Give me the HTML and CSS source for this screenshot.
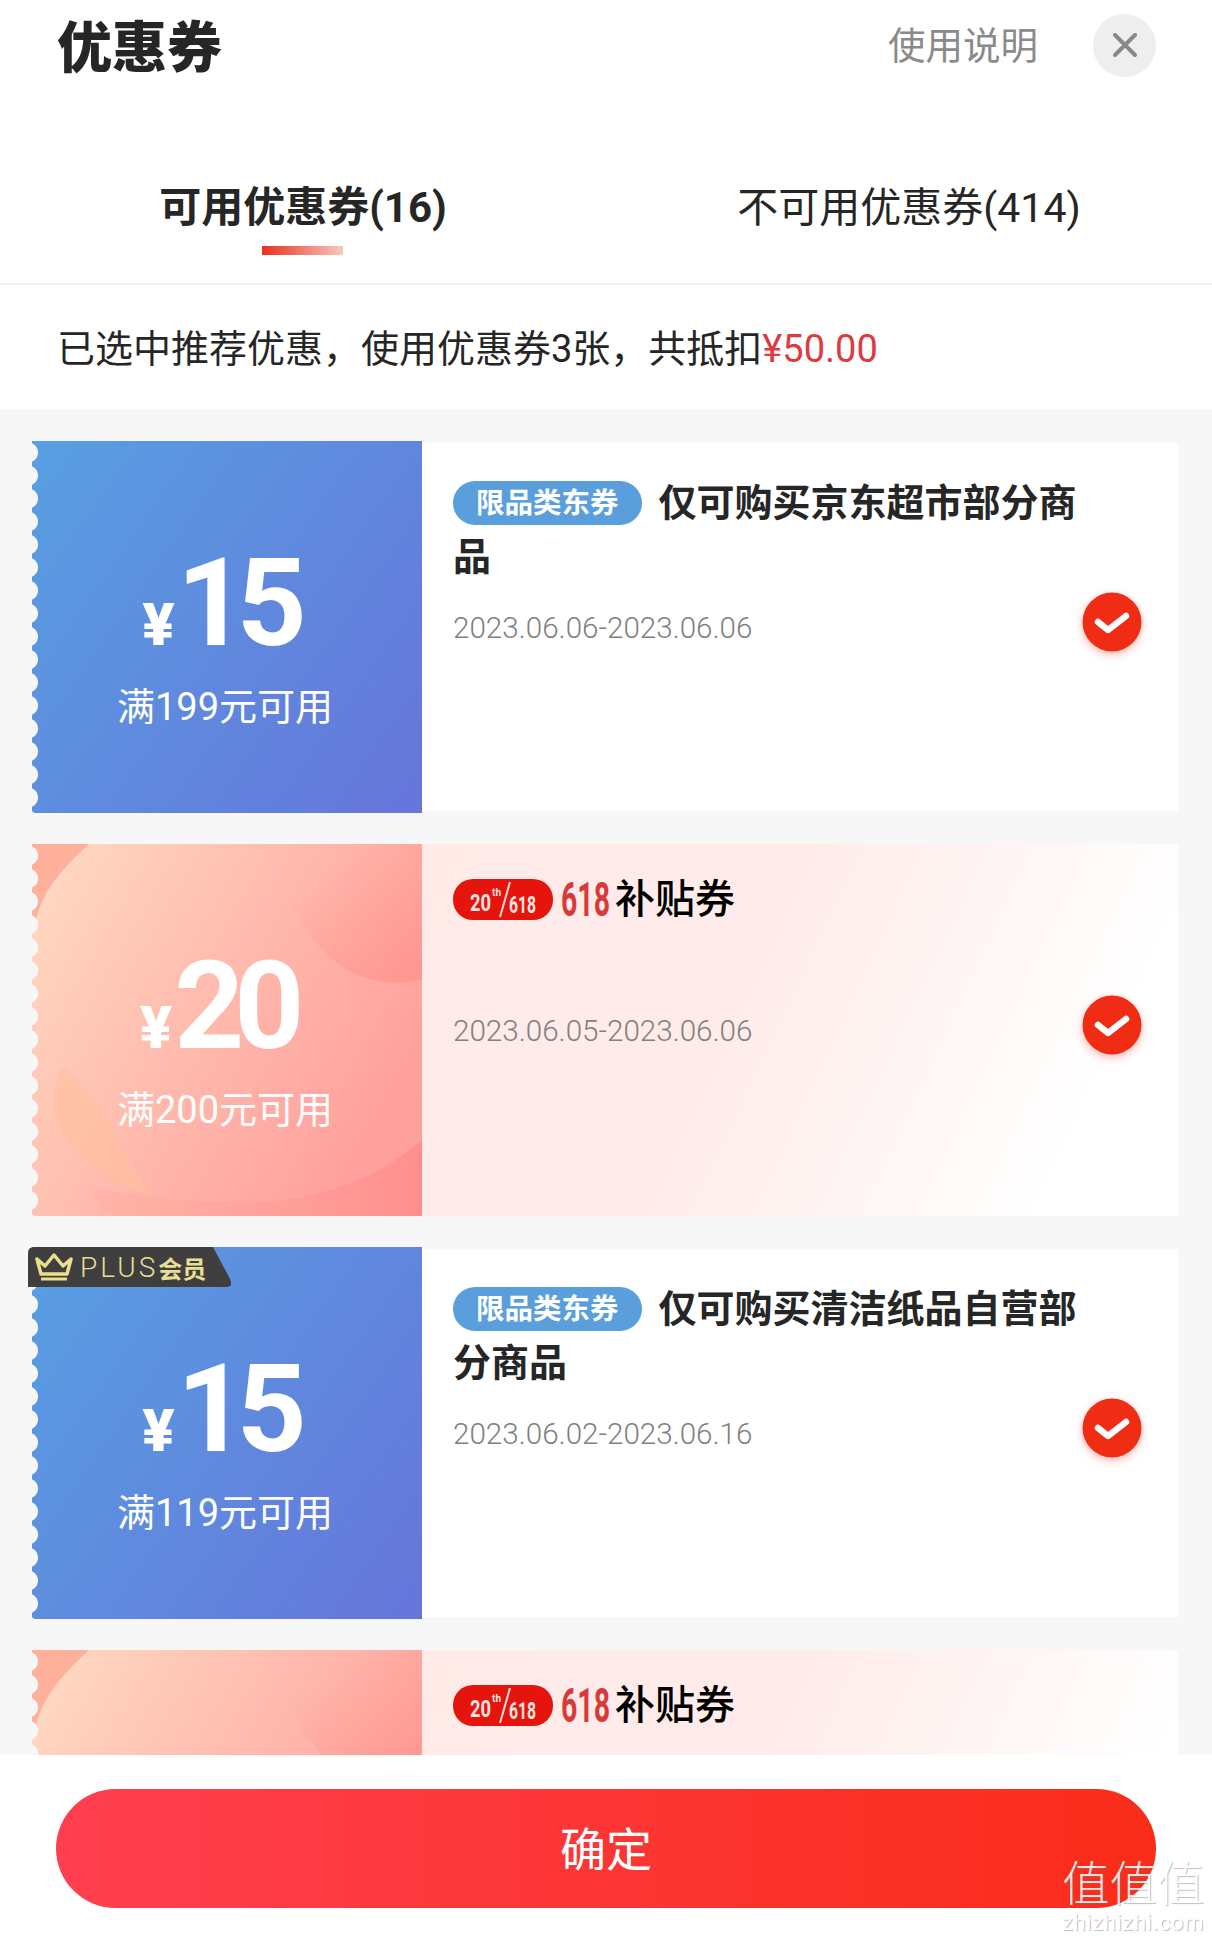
FILE: index.html
```html
<!DOCTYPE html>
<html lang="zh-CN">

<head>
    <meta charset="UTF-8">
    <meta name="viewport" content="width=device-width, initial-scale=1.0">
    <title>优惠券</title>
    <link rel="stylesheet" href="styles.css">
</head>

<body>
    <svg class="defs" width="0" height="0">
        <defs>
            <linearGradient id="peach" x1="0" y1="0" x2="1" y2="0.55">
                <stop offset="0" stop-color="#ffdcc4" />
                <stop offset="0.5" stop-color="#ffbcae" />
                <stop offset="1" stop-color="#ffa09c" />
            </linearGradient>
            <linearGradient id="peachLow" x1="0" y1="0" x2="1" y2="0">
                <stop offset="0" stop-color="#ffb5a8" />
                <stop offset="1" stop-color="#ff8f8e" />
            </linearGradient>
            <linearGradient id="peachFold" x1="0" y1="0" x2="1" y2="1">
                <stop offset="0.3" stop-color="#ff8f88" stop-opacity="0" />
                <stop offset="1" stop-color="#ff8f88" stop-opacity="0.7" />
            </linearGradient>
            <symbol id="peachBg" viewBox="0 0 390 372" preserveAspectRatio="none">
                <rect width="390" height="372" fill="url(#peach)" />
                <path d="M0 0H57C30 25 12 45 4 75L0 80Z" fill="#ffb09a" />
                <path d="M228 0C250 50 280 110 321 129C345 140 370 140 390 136V0Z" fill="url(#peachFold)" />
                <path d="M31 223C20 240 18 270 30 290C50 320 90 345 121 352C90 310 60 240 31 223Z" fill="#ffbf9f" opacity="0.6" />
                <path d="M390 296C340 340 270 360 205 359C150 358 90 350 63 344C60 360 70 372 85 372H390Z" fill="url(#peachLow)" />
            </symbol>
            <symbol id="check" viewBox="0 0 60 60">
                <circle cx="30" cy="30" r="29.5" fill="#f02c14" />
                <polyline points="16,30 26,38 44,24" fill="none" stroke="#fff" stroke-width="6.5" stroke-linecap="round" stroke-linejoin="round" />
            </symbol>
        </defs>
    </svg>

    <div class="container">
        <header class="top">
            <h1>优惠券</h1>
            <a class="guide">使用说明</a>
            <span class="close">
                <svg width="24" height="24" viewBox="0 0 24 24">
                    <path d="M2 2L22 22M22 2L2 22" stroke="#888" stroke-width="4" stroke-linecap="round" />
                </svg>
            </span>
        </header>

        <nav class="tabs">
            <div class="tab active">可用优惠券(16)</div>
            <div class="tab">不可用优惠券(414)</div>
        </nav>

        <div class="summary">已选中推荐优惠，使用优惠券3张，共抵扣<em>¥50.00</em></div>

        <main>
            <div class="coupon blue">
                <div class="stub">
                    <div class="price"><i>¥</i><b>15</b></div>
                    <p class="limit">满199元可用</p>
                </div>
                <div class="body">
                    <div class="info">
                        <div class="title"><span class="tag">限品类东券</span>仅可购买京东超市部分商品</div>
                        <p class="date">2023.06.06-2023.06.06</p>
                    </div>
                    <svg class="check"><use href="#check" /></svg>
                </div>
            </div>

            <div class="coupon pink">
                <div class="stub">
                    <svg class="stub-bg"><use href="#peachBg" /></svg>
                    <div class="price"><i>¥</i><b>20</b></div>
                    <p class="limit">满200元可用</p>
                </div>
                <div class="body">
                    <div class="info">
                        <div class="title logo">
                            <svg width="100" height="41" viewBox="0 0 100 41">
                                <rect width="100" height="41" rx="20" fill="#e5140d" />
                                <text x="17" y="32" class="logo-small" textLength="21" lengthAdjust="spacingAndGlyphs">20</text>
                                <text x="39" y="17" class="logo-th" textLength="9" lengthAdjust="spacingAndGlyphs">th</text>
                                <path d="M57 3L47 38" stroke="#ffdcd8" stroke-width="2" />
                                <text x="56" y="34" class="logo-small" textLength="27" lengthAdjust="spacingAndGlyphs">618</text>
                            </svg>
                            <svg width="50" height="41" viewBox="0 0 50 41">
                                <text x="0" y="37" class="logo-618" textLength="49" lengthAdjust="spacingAndGlyphs">618</text>
                            </svg>
                            <span class="logo-cn">补贴券</span>
                        </div>
                        <p class="date">2023.06.05-2023.06.06</p>
                    </div>
                    <svg class="check"><use href="#check" /></svg>
                </div>
            </div>

            <div class="coupon blue">
                <div class="plus">
                    <svg width="38" height="28" viewBox="0 0 38 28">
                        <path d="M2 6L10 13L19 2L28 13L36 6L32 21H6Z" fill="none" stroke="#ecdf8a" stroke-width="3.5" stroke-linejoin="round" />
                        <path d="M6 26H32" stroke="#ecdf8a" stroke-width="3" />
                    </svg>
                    <span class="plus-en">PLUS</span><span class="plus-cn">会员</span>
                </div>
                <div class="stub">
                    <div class="price"><i>¥</i><b>15</b></div>
                    <p class="limit">满119元可用</p>
                </div>
                <div class="body">
                    <div class="info">
                        <div class="title"><span class="tag">限品类东券</span>仅可购买清洁纸品自营部分商品</div>
                        <p class="date">2023.06.02-2023.06.16</p>
                    </div>
                    <svg class="check"><use href="#check" /></svg>
                </div>
            </div>

            <div class="coupon pink">
                <div class="stub">
                    <svg class="stub-bg"><use href="#peachBg" /></svg>
                </div>
                <div class="body">
                    <div class="info">
                        <div class="title logo">
                            <svg width="100" height="41" viewBox="0 0 100 41">
                                <rect width="100" height="41" rx="20" fill="#e5140d" />
                                <text x="17" y="32" class="logo-small" textLength="21" lengthAdjust="spacingAndGlyphs">20</text>
                                <text x="39" y="17" class="logo-th" textLength="9" lengthAdjust="spacingAndGlyphs">th</text>
                                <path d="M57 3L47 38" stroke="#ffdcd8" stroke-width="2" />
                                <text x="56" y="34" class="logo-small" textLength="27" lengthAdjust="spacingAndGlyphs">618</text>
                            </svg>
                            <svg width="50" height="41" viewBox="0 0 50 41">
                                <text x="0" y="37" class="logo-618" textLength="49" lengthAdjust="spacingAndGlyphs">618</text>
                            </svg>
                            <span class="logo-cn">补贴券</span>
                        </div>
                    </div>
                </div>
            </div>
        </main>

        <footer>
            <button class="ok">确定</button>
        </footer>
    </div>

    <div class="watermark">
        <div class="wm-cn">值值值</div>
        <div class="wm-en">zhizhizhi.com</div>
    </div>
</body>

</html>
```

FILE: styles.css
```css
* {
    margin: 0;
    padding: 0;
    box-sizing: border-box;
}

html,
body {
    width: 100%;
    height: 100%;
    overflow: hidden;
}

body {
    position: relative;
    font-family: Roboto, "Noto Sans CJK SC", sans-serif;
    color: #262626;
    background: #fff;
}

.defs {
    position: absolute;
}

.container {
    width: 100%;
    height: 100%;
    display: flex;
    flex-direction: column;
}

/* header */
.top {
    height: 92px;
    display: flex;
    align-items: center;
    padding: 0 56px 0 57px;
}

.top h1 {
    flex: 1;
    padding-top: 3px;
    font-size: 55px;
    font-weight: 900;
    line-height: 86px;
}

.guide {
    margin: 0 55px 7px 0;
    font-size: 37.5px;
    color: #8a8a8a;
}

.close {
    width: 63px;
    height: 63px;
    margin-bottom: 2px;
    border-radius: 50%;
    background: #eeeeee;
    display: flex;
    justify-content: center;
    align-items: center;
}

/* tabs */
.tabs {
    height: 193px;
    display: flex;
    border-bottom: 2px solid #f2f2f2;
}

.tab {
    flex: 1;
    position: relative;
    text-align: center;
    font-size: 41px;
    line-height: 60px;
    padding-top: 86px;
}

.tab.active {
    font-size: 42px;
    font-weight: 700;
}

.tab.active::after {
    content: "";
    position: absolute;
    left: 50%;
    bottom: 28px;
    width: 81px;
    height: 9px;
    margin-left: -41px;
    background: linear-gradient(90deg, #e8301c, #f9c8c2);
}

.summary {
    height: 124px;
    padding-left: 57px;
    font-size: 38px;
    line-height: 128px;
}

.summary em {
    font-style: normal;
    color: #de3a40;
}

/* list */
main {
    flex: 1;
    overflow: hidden;
    background: #f7f7f7;
    padding: 32px 34px 0 32px;
}

.coupon {
    position: relative;
    height: 372px;
    margin-bottom: 31px;
    display: flex;
}

.stub {
    position: relative;
    width: 390px;
    flex-shrink: 0;
    padding-top: 101px;
    color: #fff;
    overflow: hidden;
}

/* scalloped left edge */
.stub::before {
    content: "";
    position: absolute;
    z-index: 2;
    left: 0;
    top: 0;
    bottom: 0;
    width: 7px;
    background: radial-gradient(circle at -4px 50%, #f7f7f7 9.5px, transparent 10.5px) 0 0 / 7px 23px repeat-y;
}

.blue .stub {
    background: linear-gradient(125deg, #589fe2, #6675da);
}

.stub-bg {
    position: absolute;
    left: 0;
    top: 0;
    width: 100%;
    height: 100%;
}

.price {
    position: relative;
    display: flex;
    justify-content: center;
    align-items: baseline;
    gap: 2px;
    padding-right: 15px;
    line-height: 124px;
}

.pink .price {
    padding-right: 20px;
}

.price i {
    font-style: normal;
    font-size: 60px;
    font-weight: 900;
}

.price b {
    font-size: 122px;
    font-weight: 700;
    letter-spacing: -10px;
}

.limit {
    position: relative;
    text-align: center;
    padding-right: 4px;
    margin-top: -5px;
    font-size: 38px;
    line-height: 50px;
}

.body {
    flex: 1;
    display: flex;
    padding: 35px 36px 0 31px;
}

.blue .body {
    background: #fff;
    box-shadow: inset 0 2px #f7f7f7, inset 0 -2px #f7f7f7;
}

.pink .body {
    background: linear-gradient(115deg, #ffeae8 0%, #ffecea 42%, #fff7f6 68%, #fff 85%);
}

.info {
    flex: 1;
}

.title {
    height: 108px;
    font-size: 38px;
    font-weight: 700;
    line-height: 54px;
}

.tag {
    display: inline-block;
    height: 44px;
    padding: 0 23px;
    margin-right: 17px;
    border-radius: 22px;
    background: #5a9fdc;
    color: #fff;
    font-size: 28.5px;
    line-height: 46px;
    vertical-align: 3px;
}

.logo {
    display: flex;
    align-items: flex-start;
    gap: 8px;
    font-size: 40px;
    font-weight: 500;
    line-height: 41px;
    color: #000;
}

.logo-cn {
    margin-left: -4px;
}

.logo-small {
    font: 700 24px Roboto, sans-serif;
    fill: #ffe5e2;
}

.logo-th {
    font: 700 11px Roboto, sans-serif;
    fill: #ffe5e2;
}

.logo-618 {
    font: 700 48px Roboto, sans-serif;
    fill: #d83a3a;
}

.date {
    margin-top: 24px;
    font-size: 29.6px;
    font-weight: 300;
    line-height: 40px;
    color: #808080;
}

.check {
    flex-shrink: 0;
    width: 60px;
    height: 60px;
    margin-top: 116px;
    filter: drop-shadow(0 3px 4px rgba(240, 44, 20, .35));
}

/* PLUS corner */
.plus {
    position: absolute;
    z-index: 3;
    left: -4px;
    top: 0;
    width: 203px;
    height: 40px;
    display: flex;
    align-items: center;
    padding-left: 7px;
    background: #3f3f3f;
    color: #e9de95;
    clip-path: path("M6 0H185L202 32Q206 40 198 40H0V6Q0 0 6 0Z");
}

.plus-en {
    margin-left: 7px;
    font-size: 28px;
    font-weight: 300;
    letter-spacing: 3px;
}

.plus-cn {
    font-size: 24px;
    font-weight: 700;
}

/* bottom button */
footer {
    position: relative;
    height: 188px;
    padding: 34px 56px 0;
    background: #fff;
}

.ok {
    display: block;
    width: 100%;
    height: 119px;
    padding-bottom: 6px;
    border: 0;
    border-radius: 60px;
    background: linear-gradient(90deg, #ff3f50, #fa2c19);
    color: #fff;
    font-family: inherit;
    font-size: 46px;
    font-weight: 400;
}

/* site watermark */
.watermark {
    position: absolute;
    right: 7px;
    bottom: 8px;
    width: 143px;
    color: #fff;
    text-shadow: 1px 1px 1px rgba(120, 120, 120, .55);
    opacity: .85;
    white-space: nowrap;
}

.wm-cn {
    font-size: 47.5px;
    font-weight: 300;
    line-height: 52px;
}

.wm-en {
    font-size: 22px;
    line-height: 24px;
    letter-spacing: .6px;
}
```
